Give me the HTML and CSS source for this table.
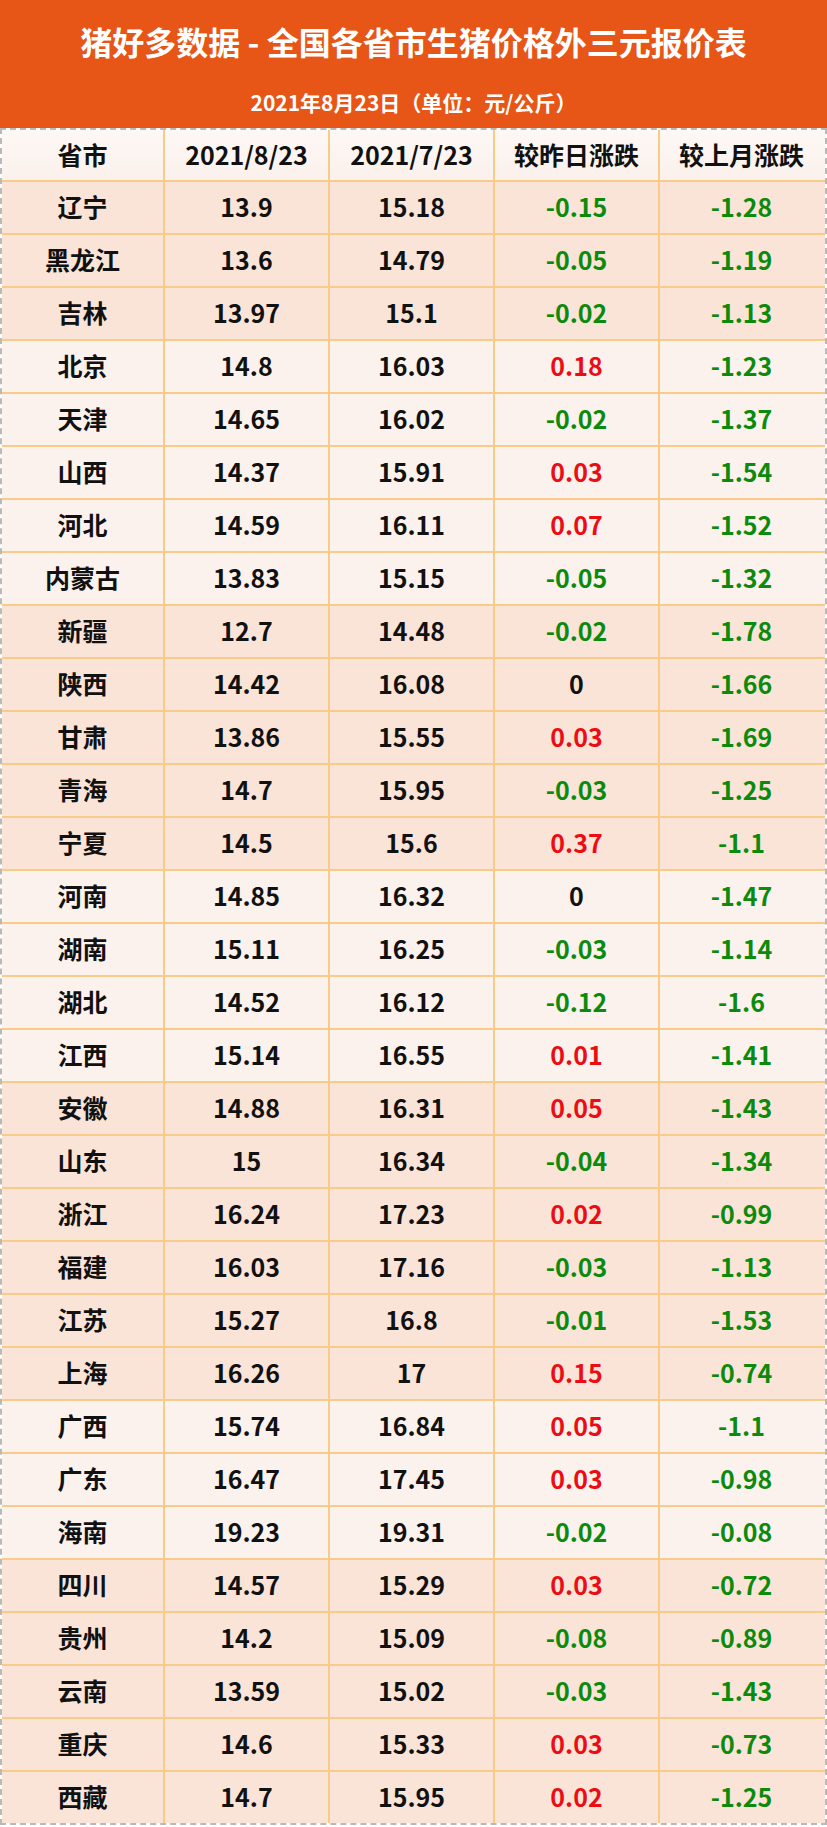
FILE: index.html
```html
<!DOCTYPE html>
<html lang="zh-CN">
<head>
<meta charset="utf-8">
<title>猪好多数据</title>
<link rel="stylesheet" href="styles.css">
</head>
<body>
<div class="page">
  <header class="banner">
    <h1 class="title">猪好多数据 - 全国各省市生猪价格外三元报价表</h1>
    <p class="subtitle">2021年8月23日（单位：元/公斤）</p>
  </header>
  <div class="table">
    <div class="row head">
      <div class="cell">省市</div>
      <div class="cell">2021/8/23</div>
      <div class="cell">2021/7/23</div>
      <div class="cell">较昨日涨跌</div>
      <div class="cell">较上月涨跌</div>
    </div>
    <div class="row peach"><div class="cell">辽宁</div><div class="cell">13.9</div><div class="cell">15.18</div><div class="cell down">-0.15</div><div class="cell down">-1.28</div></div>
    <div class="row peach"><div class="cell">黑龙江</div><div class="cell">13.6</div><div class="cell">14.79</div><div class="cell down">-0.05</div><div class="cell down">-1.19</div></div>
    <div class="row peach"><div class="cell">吉林</div><div class="cell">13.97</div><div class="cell">15.1</div><div class="cell down">-0.02</div><div class="cell down">-1.13</div></div>
    <div class="row light"><div class="cell">北京</div><div class="cell">14.8</div><div class="cell">16.03</div><div class="cell up">0.18</div><div class="cell down">-1.23</div></div>
    <div class="row light"><div class="cell">天津</div><div class="cell">14.65</div><div class="cell">16.02</div><div class="cell down">-0.02</div><div class="cell down">-1.37</div></div>
    <div class="row light"><div class="cell">山西</div><div class="cell">14.37</div><div class="cell">15.91</div><div class="cell up">0.03</div><div class="cell down">-1.54</div></div>
    <div class="row light"><div class="cell">河北</div><div class="cell">14.59</div><div class="cell">16.11</div><div class="cell up">0.07</div><div class="cell down">-1.52</div></div>
    <div class="row light"><div class="cell">内蒙古</div><div class="cell">13.83</div><div class="cell">15.15</div><div class="cell down">-0.05</div><div class="cell down">-1.32</div></div>
    <div class="row peach"><div class="cell">新疆</div><div class="cell">12.7</div><div class="cell">14.48</div><div class="cell down">-0.02</div><div class="cell down">-1.78</div></div>
    <div class="row peach"><div class="cell">陕西</div><div class="cell">14.42</div><div class="cell">16.08</div><div class="cell">0</div><div class="cell down">-1.66</div></div>
    <div class="row peach"><div class="cell">甘肃</div><div class="cell">13.86</div><div class="cell">15.55</div><div class="cell up">0.03</div><div class="cell down">-1.69</div></div>
    <div class="row peach"><div class="cell">青海</div><div class="cell">14.7</div><div class="cell">15.95</div><div class="cell down">-0.03</div><div class="cell down">-1.25</div></div>
    <div class="row peach"><div class="cell">宁夏</div><div class="cell">14.5</div><div class="cell">15.6</div><div class="cell up">0.37</div><div class="cell down">-1.1</div></div>
    <div class="row light"><div class="cell">河南</div><div class="cell">14.85</div><div class="cell">16.32</div><div class="cell">0</div><div class="cell down">-1.47</div></div>
    <div class="row light"><div class="cell">湖南</div><div class="cell">15.11</div><div class="cell">16.25</div><div class="cell down">-0.03</div><div class="cell down">-1.14</div></div>
    <div class="row light"><div class="cell">湖北</div><div class="cell">14.52</div><div class="cell">16.12</div><div class="cell down">-0.12</div><div class="cell down">-1.6</div></div>
    <div class="row light"><div class="cell">江西</div><div class="cell">15.14</div><div class="cell">16.55</div><div class="cell up">0.01</div><div class="cell down">-1.41</div></div>
    <div class="row peach"><div class="cell">安徽</div><div class="cell">14.88</div><div class="cell">16.31</div><div class="cell up">0.05</div><div class="cell down">-1.43</div></div>
    <div class="row peach"><div class="cell">山东</div><div class="cell">15</div><div class="cell">16.34</div><div class="cell down">-0.04</div><div class="cell down">-1.34</div></div>
    <div class="row peach"><div class="cell">浙江</div><div class="cell">16.24</div><div class="cell">17.23</div><div class="cell up">0.02</div><div class="cell down">-0.99</div></div>
    <div class="row peach"><div class="cell">福建</div><div class="cell">16.03</div><div class="cell">17.16</div><div class="cell down">-0.03</div><div class="cell down">-1.13</div></div>
    <div class="row peach"><div class="cell">江苏</div><div class="cell">15.27</div><div class="cell">16.8</div><div class="cell down">-0.01</div><div class="cell down">-1.53</div></div>
    <div class="row peach"><div class="cell">上海</div><div class="cell">16.26</div><div class="cell">17</div><div class="cell up">0.15</div><div class="cell down">-0.74</div></div>
    <div class="row light"><div class="cell">广西</div><div class="cell">15.74</div><div class="cell">16.84</div><div class="cell up">0.05</div><div class="cell down">-1.1</div></div>
    <div class="row light"><div class="cell">广东</div><div class="cell">16.47</div><div class="cell">17.45</div><div class="cell up">0.03</div><div class="cell down">-0.98</div></div>
    <div class="row light"><div class="cell">海南</div><div class="cell">19.23</div><div class="cell">19.31</div><div class="cell down">-0.02</div><div class="cell down">-0.08</div></div>
    <div class="row peach"><div class="cell">四川</div><div class="cell">14.57</div><div class="cell">15.29</div><div class="cell up">0.03</div><div class="cell down">-0.72</div></div>
    <div class="row peach"><div class="cell">贵州</div><div class="cell">14.2</div><div class="cell">15.09</div><div class="cell down">-0.08</div><div class="cell down">-0.89</div></div>
    <div class="row peach"><div class="cell">云南</div><div class="cell">13.59</div><div class="cell">15.02</div><div class="cell down">-0.03</div><div class="cell down">-1.43</div></div>
    <div class="row peach"><div class="cell">重庆</div><div class="cell">14.6</div><div class="cell">15.33</div><div class="cell up">0.03</div><div class="cell down">-0.73</div></div>
    <div class="row peach last"><div class="cell">西藏</div><div class="cell">14.7</div><div class="cell">15.95</div><div class="cell up">0.02</div><div class="cell down">-1.25</div></div>
  </div>
</div>
</body>
</html>
```

FILE: styles.css
```css
* { box-sizing: border-box; }
html, body { margin: 0; padding: 0; background: #ffffff; }
body {
  font-family: "Noto Sans CJK SC", "Noto Sans", sans-serif;
  font-weight: 700;
  color: #111111;
}
.page { width: 827px; }
.banner {
  height: 128px;
  background: #E75517;
  color: #ffffff;
  display: flex;
  flex-direction: column;
  align-items: center;
  padding-top: 18px;
}
.title {
  margin: 0;
  font-size: 32px;
  line-height: 46px;
  font-weight: 700;
  letter-spacing: 0;
}
.subtitle {
  margin: 24px 0 0 0;
  font-size: 21px;
  line-height: 28px;
  font-weight: 700;
}
.table {
  border: 2px dashed #b9b9b9;
  width: 827px;
}
.row {
  display: flex;
  height: 53px;
  border-bottom: 2px solid #F8CB88;
}
.row.head {
  height: 52px;
  background: linear-gradient(#FDF8F5, #FBF1EC);
}
.row.last { border-bottom: 0; height: 51px; }
.row.peach { background: #FAE4D8; }
.row.light { background: #FBF2EE; }
.cell {
  width: 165px;
  display: flex;
  align-items: center;
  justify-content: center;
  border-right: 2px solid #F8CB88;
  font-size: 25px;
  line-height: 1;
  padding-bottom: 2px;
}
.cell:first-child { width: 163px; }
.cell:last-child { border-right: 0; width: 163px; }
.cell.down { color: #0C8A0C; }
.cell.up { color: #EC0C14; }
```
